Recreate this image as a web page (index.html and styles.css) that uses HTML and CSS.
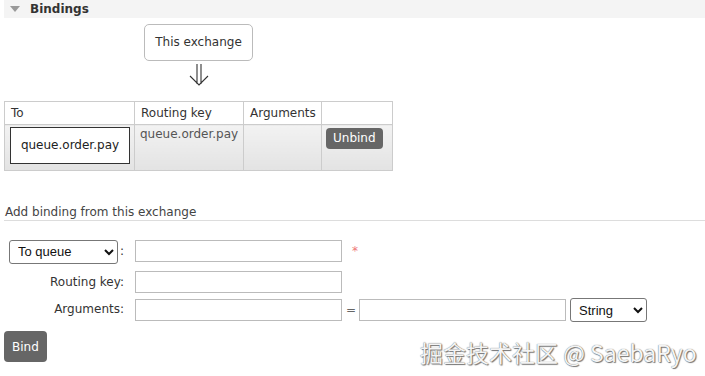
FILE: index.html
```html
<!DOCTYPE html>
<html lang="en">
<head>
    <meta charset="UTF-8">
    <title>Bindings</title>
    <link rel="stylesheet" href="styles.css">
</head>
<body>

<div class="section">
    <!-- Section header -->
    <div class="section-header">
        <span class="toggle"></span>
        <span class="section-title">Bindings</span>
    </div>

    <!-- Binding diagram -->
    <div class="bindings-wrap">
        <div class="exchange-box">This exchange</div>
        <svg class="arrow" width="20" height="22" viewBox="0 0 20 22">
            <path d="M8 0 V20 M12 0 V20 M1 12 L10 21 L19 12" fill="none" stroke="#333" stroke-width="1.1"/>
        </svg>
        <table class="bindings">
            <thead>
                <tr>
                    <th class="col-to">To</th>
                    <th class="col-key">Routing key</th>
                    <th class="col-args">Arguments</th>
                    <th class="col-act"></th>
                </tr>
            </thead>
            <tbody>
                <tr>
                    <td><span class="queue-box">queue.order.pay</span></td>
                    <td>queue.order.pay</td>
                    <td></td>
                    <td><button class="btn btn-small">Unbind</button></td>
                </tr>
            </tbody>
        </table>
    </div>

    <!-- Add binding form -->
    <h3 class="form-title">Add binding from this exchange</h3>
    <div class="form-grid">
        <div class="form-label first-label">
            <select class="dest-select">
                <option>To queue</option>
                <option>To exchange</option>
            </select>:
        </div>
        <div class="form-field">
            <input type="text" class="text-input">
            <span class="mandatory">*</span>
        </div>

        <div class="form-label">Routing key:</div>
        <div class="form-field">
            <input type="text" class="text-input">
        </div>

        <div class="form-label">Arguments:</div>
        <div class="form-field">
            <input type="text" class="text-input">
            <span class="equals">=</span>
            <input type="text" class="text-input">
            <select class="type-select">
                <option>String</option>
                <option>Number</option>
                <option>Boolean</option>
            </select>
        </div>
    </div>
    <button class="btn btn-big">Bind</button>
</div>

<div class="watermark">掘金技术社区 @ SaebaRyo</div>

</body>
</html>
```

FILE: styles.css
```css
/* Base */
body {
    margin: 0;
    font-family: "DejaVu Sans", Verdana, sans-serif;
    font-size: 12px;
    color: #484848;
    background-color: #fff;
}

.section {
    padding: 0 0 0 4px;
}

/* Section Header */
.section-header {
    display: flex;
    align-items: center;
    height: 18px;
    background-color: #f4f4f4;
    margin-top: -4px;
    padding-top: 4px;
}

.toggle {
    width: 0;
    height: 0;
    border-left: 5px solid transparent;
    border-right: 5px solid transparent;
    border-top: 6px solid #999;
    margin: 0 10px 0 6px;
}

.section-title {
    font-weight: bold;
    font-size: 12px;
    color: #333;
}

/* Diagram */
.bindings-wrap {
    display: flex;
    flex-direction: column;
    align-items: center;
    width: 389px;
    padding-top: 6px;
}

.exchange-box {
    border: 1px solid #bbb;
    border-radius: 5px;
    padding: 10px 10px;
    line-height: 15px;
    font-size: 12px;
    color: #333;
}

.arrow {
    display: block;
    margin: 3px 0 15px;
}

/* Bindings table */
.bindings {
    border-collapse: collapse;
    table-layout: fixed;
    width: 389px;
}

.bindings th {
    font-weight: normal;
    text-align: left;
    color: #333;
    height: 22px;
    padding: 0 6px;
    border: 1px solid #ccc;
    background-color: #fff;
}

.bindings td {
    vertical-align: top;
    height: 41px;
    padding: 2px 5px;
    border: 1px solid #ccc;
    background: linear-gradient(#f2f2f2, #e3e3e3);
    color: #555;
}

.col-to { width: 117px; }
.col-key { width: 96px; }
.col-args { width: 65px; }

.queue-box {
    display: block;
    border: 1px solid #333;
    background-color: #fff;
    color: #222;
    text-align: center;
    line-height: 35px;
    width: 118px;
}

/* Buttons */
.btn {
    font-family: "DejaVu Sans", Verdana, sans-serif;
    background-color: #666;
    color: #fff;
    border: none;
    cursor: pointer;
    font-weight: 500;
}

.btn-small {
    font-size: 12px;
    line-height: 15px;
    padding: 3px 7px;
    border-radius: 4px;
    margin: 1px 0 0 -1px;
}

.btn-big {
    font-size: 12px;
    padding: 8px 8px;
    border-radius: 4px;
    margin-top: 10px;
    height: 31px;
}

.btn:hover {
    background-color: #555;
}

/* Form */
.form-title {
    font-weight: normal;
    font-size: 12px;
    color: #444;
    margin: 34px 0 0 0;
    padding: 0 0 1px 1px;
    border-bottom: 1px solid #ddd;
}

.form-grid {
    display: grid;
    grid-template-columns: 120px auto;
    grid-template-rows: 31px 27px 24px;
    column-gap: 11px;
    margin-top: 18px;
    align-items: start;
}

.form-label {
    text-align: right;
    color: #333;
    line-height: 25px;
}

.first-label {
    display: flex;
    align-items: center;
    justify-content: flex-end;
    gap: 2px;
}

.form-field {
    display: flex;
    align-items: center;
    padding-top: 1px;
}

.text-input {
    width: 203px;
    height: 18px;
    border: 1px solid #bbb;
    padding: 1px;
    margin: 0;
}

.dest-select,
.type-select {
    font-family: "Liberation Sans", Arial, sans-serif;
    font-size: 13px;
    color: #111;
    height: 24px;
    border: 1px solid #777;
    border-radius: 3px;
    background-color: #fff;
    padding: 0 4px;
}

.dest-select {
    width: 109px;
}

.type-select {
    width: 77px;
    margin-left: 4px;
}

.mandatory {
    color: #e77;
    margin-left: 10px;
    font-size: 12px;
}

.equals {
    color: #666;
    margin: 0 3px 0 4px;
}

/* Watermark overlay */
.watermark {
    position: absolute;
    left: 420px;
    top: 335px;
    font-family: "Noto Sans CJK SC", "DejaVu Sans", sans-serif;
    font-size: 23px;
    color: #f4f4f4;
    text-shadow: 0 0 1px #555, 1px 1px 1px #777;
}
```
